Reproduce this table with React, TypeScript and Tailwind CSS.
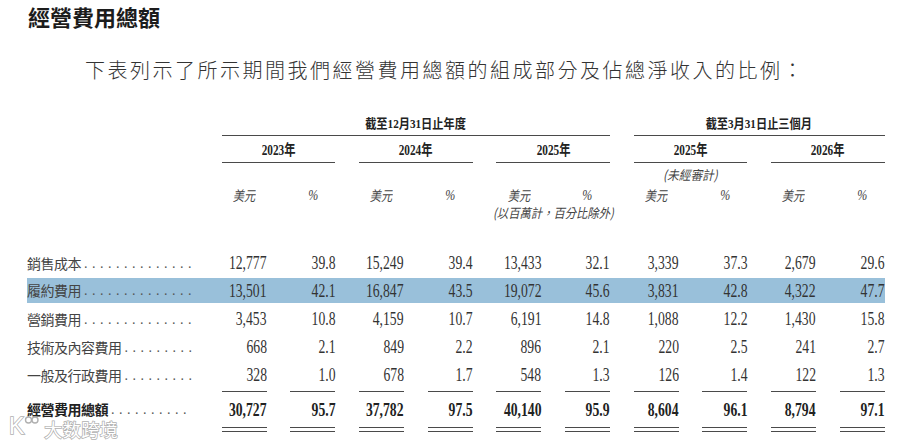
import React from "react";

const GRID = "grid grid-cols-[171px_repeat(10,45px)] gap-x-[23.67px]";
const SERIF = "[font-family:'Liberation_Serif','Noto_Sans_CJK_TC',serif]";
const CJK = "[font-family:'Noto_Sans_CJK_TC','Liberation_Sans',sans-serif]";

const rows: string[][] = [
  ["銷售成本", "12,777", "39.8", "15,249", "39.4", "13,433", "32.1", "3,339", "37.3", "2,679", "29.6"],
  ["履約費用", "13,501", "42.1", "16,847", "43.5", "19,072", "45.6", "3,831", "42.8", "4,322", "47.7"],
  ["營銷費用", "3,453", "10.8", "4,159", "10.7", "6,191", "14.8", "1,088", "12.2", "1,430", "15.8"],
  ["技術及內容費用", "668", "2.1", "849", "2.2", "896", "2.1", "220", "2.5", "241", "2.7"],
  ["一般及行政費用", "328", "1.0", "678", "1.7", "548", "1.3", "126", "1.4", "122", "1.3"],
];
const total = ["經營費用總額", "30,727", "95.7", "37,782", "97.5", "40,140", "95.9", "8,604", "96.1", "8,794", "97.1"];

function Label({ text, bold }: { text: string; bold?: boolean }) {
  const n = Math.floor((171 - 13.5 * text.length - 3) / 8);
  const dots = ".".repeat(Math.max(0, n));
  return (
    <div className="flex items-center min-w-0">
      <span className={`${CJK} text-[14px] tracking-[-0.5px] whitespace-nowrap ${bold ? "font-bold text-[#222]" : "text-[#444]"}`}>
        {text}
      </span>
      <span className="ml-[3px] [font-family:'Liberation_Serif',serif] text-[14px] tracking-[4.5px] whitespace-nowrap text-[#555]">
        {dots}
      </span>
    </div>
  );
}

function Num({ v, bold }: { v: string; bold?: boolean }) {
  return (
    <div className="flex items-center justify-end">
      <span
        className={`${SERIF} inline-block origin-right scale-x-[0.76] text-[18px] leading-[20px] ${bold ? "font-bold text-[#222]" : "text-[#333]"}`}
      >
        {v}
      </span>
    </div>
  );
}

function DataRow({ r, hl }: { r: string[]; hl?: boolean }) {
  return (
    <div className={`${GRID} h-[28px] ${hl ? "bg-[#99c0da] bg-clip-content pt-[1px] pb-[2px]" : ""}`}>
      <Label text={r[0]} />
      {r.slice(1).map((v, i) => (
        <Num key={i} v={v} />
      ))}
    </div>
  );
}

export default function App() {
  const line = "border-[#4a4a4a]";
  return (
    <div className="relative w-[900px] h-[444px] bg-white overflow-hidden text-[#333]">
      <div className={`${CJK} ml-[28px] pt-[4px] text-[22px] leading-[24px] font-bold text-[#1c1c1c]`}>經營費用總額</div>
      <div className={`${CJK} ml-[85px] mt-[28px] text-[20px] leading-[28px] tracking-[2.5px] font-light text-[#333] whitespace-nowrap`}>
        下表列示了所示期間我們經營費用總額的組成部分及佔總淨收入的比例：
      </div>

      <div className="ml-[27px] mt-[33px] w-[858px]">
        {/* Row A: period titles */}
        <div className={`${GRID} h-[19px]`}>
          <div className={`col-start-2 col-span-6 border-b ${line} pb-[4px] flex items-center justify-center`}>
            <span className={`${SERIF} inline-block scale-x-[0.86] text-[13px] font-bold text-[#222] leading-[14px]`}>截至12月31日止年度</span>
          </div>
          <div className={`col-start-8 col-span-4 border-b ${line} pb-[4px] flex items-center justify-center`}>
            <span className={`${SERIF} inline-block scale-x-[0.86] text-[13px] font-bold text-[#222] leading-[14px]`}>截至3月31日止三個月</span>
          </div>
        </div>

        {/* Row B: years */}
        <div className={`${GRID} h-[27px]`}>
          {[
            ["col-start-2 col-span-2", "2023年"],
            ["col-start-4 col-span-2", "2024年"],
            ["col-start-6 col-span-2", "2025年"],
            ["col-start-8 col-span-2", "2025年"],
            ["col-start-10 col-span-2", "2026年"],
          ].map(([c, t], i) => (
            <div key={i} className={`${c} border-b ${line} pt-[2px] flex items-center justify-center`}>
              <span className={`${SERIF} inline-block scale-x-[0.75] text-[15px] font-bold text-[#222] leading-[16px]`}>{t}</span>
            </div>
          ))}
        </div>

        {/* Row C: unaudited */}
        <div className={`${GRID} h-[22px]`}>
          <div className="col-start-8 col-span-2 pt-[2px] flex items-center justify-center">
            <span className={`${CJK} inline-block scale-x-[0.9] italic text-[13px] text-[#444] leading-[16px]`}>(未經審計)</span>
          </div>
        </div>

        {/* Row D: units */}
        <div className={`${GRID} h-[20px]`}>
          {Array.from({ length: 10 }).map((_, i) => (
            <div key={i} className={`${i === 0 ? "col-start-2" : ""} flex items-center justify-center`}>
              {i % 2 === 0 ? (
                <span className={`${CJK} inline-block scale-x-[0.8] italic text-[14px] text-[#444] leading-[15px]`}>美元</span>
              ) : (
                <span className="[font-family:'Liberation_Serif',serif] inline-block scale-x-[0.8] italic text-[15px] text-[#444] leading-[15px]">%</span>
              )}
            </div>
          ))}
        </div>

        {/* Row E: millions note */}
        <div className={`${GRID} h-[16px]`}>
          <div className="col-start-6 col-span-2 flex items-center justify-center">
            <span className={`${CJK} inline-block scale-x-[0.87] italic text-[13px] text-[#444] leading-[14px] whitespace-nowrap`}>
              (以百萬計，百分比除外)
            </span>
          </div>
        </div>

        {/* Data rows */}
        <div className="mt-[28px]">
          {rows.map((r, i) => (
            <DataRow key={i} r={r} hl={i === 1} />
          ))}
        </div>

        {/* single underline */}
        <div className={`${GRID} h-[3px]`}>
          {Array.from({ length: 10 }).map((_, i) => (
            <div key={i} className={`${i === 0 ? "col-start-2" : ""} border-b ${line}`} />
          ))}
        </div>

        {/* total row */}
        <div className={`${GRID} h-[35px]`}>
          <Label text={total[0]} bold />
          {total.slice(1).map((v, i) => (
            <Num key={i} v={v} bold />
          ))}
        </div>

        {/* double underline */}
        <div className={`${GRID} h-[5px]`}>
          {Array.from({ length: 10 }).map((_, i) => (
            <div key={i} className={`${i === 0 ? "col-start-2" : ""} border-t border-b ${line}`} />
          ))}
        </div>
      </div>

      {/* watermark */}
      <div className="absolute left-[9px] top-[414px] flex items-start pointer-events-none">
        <span className="[font-family:'Liberation_Sans',sans-serif] text-[23px] leading-[24px] text-white [-webkit-text-stroke:1.5px_#b0b0b0] [paint-order:stroke_fill]">
          K
        </span>
        <svg width="16" height="10" viewBox="0 0 16 10" className="mt-[1px]">
          <circle cx="4.5" cy="5" r="3" fill="white" stroke="#b0b0b0" strokeWidth="1.4" />
          <circle cx="11" cy="5" r="3" fill="white" stroke="#b0b0b0" strokeWidth="1.4" />
        </svg>
        <span className="ml-[4px] mt-[5px] [font-family:'Noto_Sans_CJK_SC',sans-serif] text-[18px] leading-[20px] tracking-[0.5px] text-white [-webkit-text-stroke:1.5px_#b0b0b0] [paint-order:stroke_fill]">
          大数跨境
        </span>
      </div>
    </div>
  );
}
